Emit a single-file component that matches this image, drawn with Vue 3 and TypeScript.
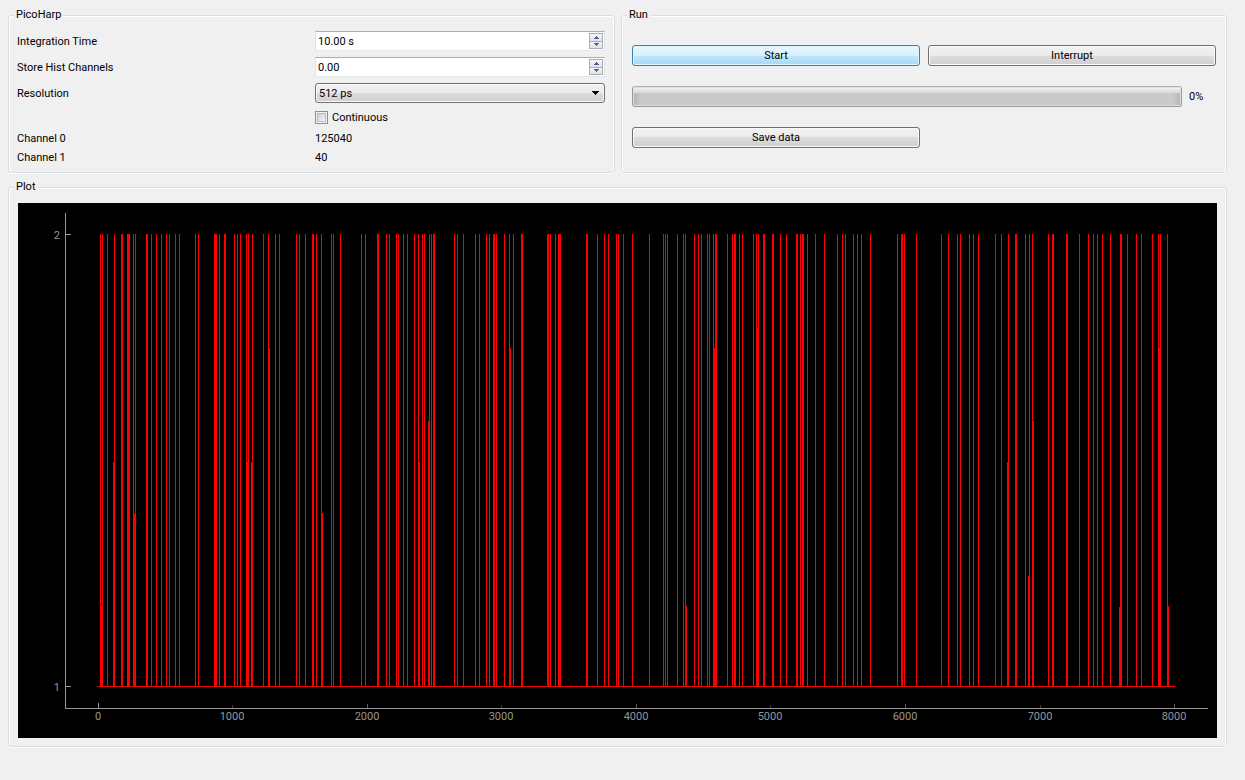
<script setup lang="ts">
import { computed, ref } from 'vue'

const integrationTime = ref('10.00 s')
const storeChannels = ref('0.00')
const resolution = ref('512 ps')
const continuous = ref(false)
const progress = ref(0)
const channel0 = ref(125040)
const channel1 = ref(40)

const top = 234
const base = 686

// Columns where the histogram reaches two counts
const peaks: number[] = [
  100, 102, 107, 114, 121, 122, 127, 128, 129, 133, 135, 146, 147, 151, 156, 161, 166, 169, 175, 179,
  195, 198, 214, 215, 216, 219, 224, 225, 234, 237, 240, 246, 248, 252, 263, 268, 275, 279, 296, 299,
  305, 312, 313, 316, 321, 331, 333, 340, 361, 365, 377, 378, 386, 389, 396, 398, 403, 407, 414, 418,
  422, 424, 429, 431, 433, 434, 454, 457, 463, 475, 479, 486, 489, 493, 494, 496, 504, 509, 513, 521,
  522, 547, 548, 550, 555, 558, 559, 560, 586, 587, 597, 604, 608, 616, 618, 623, 632, 649, 663, 665,
  667, 677, 683, 685, 694, 698, 701, 707, 709, 713, 715, 716, 727, 732, 734, 735, 739, 742, 753, 756,
  758, 763, 764, 772, 773, 780, 786, 796, 797, 800, 802, 803, 807, 815, 824, 837, 842, 845, 853, 857,
  861, 870, 897, 901, 902, 904, 916, 941, 948, 957, 960, 969, 973, 978, 995, 1001, 1008, 1015, 1016,
  1025, 1029, 1032, 1048, 1052, 1053, 1066, 1067, 1079, 1088, 1093, 1097, 1102, 1110, 1120, 1121,
  1127, 1136, 1141, 1152, 1158, 1160, 1167,
]

// Columns with a partial height: [x, y of the upper end]
const partials: [number, number][] = [
  [101, 606], [113, 462], [134, 514], [247, 462], [251, 462], [269, 348], [322, 513], [419, 462],
  [428, 421], [510, 348], [686, 606], [714, 348], [757, 328], [1007, 462], [1028, 576],
  [1033, 421], [1119, 607], [1159, 348], [1168, 606],
]

const trace = computed(() =>
  [...peaks.map((x): [number, number] => [x, top]), ...partials]
    .map(([x, y]) => `M${x} ${y}h1V${base}h-1z`)
    .join(''),
)

const xTicks = [
  { x: 98, label: '0', height: 5, tone: 'strong' },
  { x: 232, label: '1000', height: 3, tone: 'faint' },
  { x: 367, label: '2000', height: 4, tone: 'soft' },
  { x: 501, label: '3000', height: 3, tone: 'faint' },
  { x: 636, label: '4000', height: 4, tone: 'soft' },
  { x: 770, label: '5000', height: 3, tone: 'faint' },
  { x: 905, label: '6000', height: 4, tone: 'soft' },
  { x: 1040, label: '7000', height: 3, tone: 'faint' },
  { x: 1174, label: '8000', height: 4, tone: 'soft' },
]
const yTicks = [
  { y: 234, label: '2' },
  { y: 686, label: '1' },
]
</script>

<template>
  <main class="window">
    <div class="top">
      <fieldset class="group">
        <legend>PicoHarp</legend>
        <div class="form">
          <label for="integration">Integration Time</label>
          <div class="spin">
            <input id="integration" v-model="integrationTime" type="text" />
            <div class="steps">
              <button type="button" aria-label="Increase integration time">
                <svg viewBox="0 0 5 3"><path d="M2 0h1v1h1v1h1v1H0V2h1V1h1z" /></svg>
              </button>
              <button type="button" aria-label="Decrease integration time">
                <svg viewBox="0 0 5 3"><path d="M0 0h5v1H4v1H3v1H2V2H1V1H0z" /></svg>
              </button>
            </div>
          </div>

          <label for="store">Store Hist Channels</label>
          <div class="spin">
            <input id="store" v-model="storeChannels" type="text" />
            <div class="steps">
              <button type="button" aria-label="Increase channels">
                <svg viewBox="0 0 5 3"><path d="M2 0h1v1h1v1h1v1H0V2h1V1h1z" /></svg>
              </button>
              <button type="button" aria-label="Decrease channels">
                <svg viewBox="0 0 5 3"><path d="M0 0h5v1H4v1H3v1H2V2H1V1H0z" /></svg>
              </button>
            </div>
          </div>

          <label for="resolution">Resolution</label>
          <div class="combo">
            <select id="resolution" v-model="resolution">
              <option>512 ps</option>
            </select>
            <svg viewBox="0 0 7 4"><path d="M0 0h7v1H6v1H5v1H4v1H3V3H2V2H1V1H0z" /></svg>
          </div>

          <label class="check">
            <input v-model="continuous" type="checkbox" />
            <span>Continuous</span>
          </label>

          <span>Channel 0</span>
          <output>{{ channel0 }}</output>
          <span>Channel 1</span>
          <output>{{ channel1 }}</output>
        </div>
      </fieldset>

      <fieldset class="group">
        <legend>Run</legend>
        <div class="run">
          <button type="button" class="push primary">Start</button>
          <button type="button" class="push">Interrupt</button>
          <div class="meter">
            <progress id="run-progress" :value="progress" max="100" aria-label="Progress"></progress>
            <label for="run-progress">{{ progress }}%</label>
          </div>
          <button type="button" class="push">Save data</button>
        </div>
      </fieldset>
    </div>

    <fieldset class="group plot">
      <legend>Plot</legend>
      <svg class="chart" viewBox="18 203 1199 535" role="img" aria-label="Histogram">
        <rect x="18" y="203" width="1199" height="535" />
        <g class="axis">
          <rect x="65" y="213" width="1" height="496" />
          <rect x="65" y="708" width="1143" height="1" />
          <rect v-for="t in yTicks" :key="t.label" x="66" :y="t.y" width="5" height="1" />
          <rect
            v-for="t in xTicks"
            :key="t.label"
            :class="t.tone"
            :x="t.x"
            :y="708 - t.height"
            width="1"
            :height="t.height"
          />
        </g>
        <g class="trace">
          <path :d="trace" />
          <rect x="97" :y="base" width="1078" height="1" />
        </g>
        <g class="labels">
          <text v-for="t in yTicks" :key="t.label" x="60" :y="t.y + 5" text-anchor="end">
            {{ t.label }}
          </text>
          <text v-for="t in xTicks" :key="t.label" :x="t.x" y="720" text-anchor="middle">
            {{ t.label }}
          </text>
        </g>
      </svg>
    </fieldset>
  </main>
</template>

<style>
body {
  margin: 0;
  background: #f0f0f0;
}
</style>

<style scoped>
.window,
.window * {
  box-sizing: border-box;
}
.window {
  padding: 8px 18px 8px 8px;
  color: #000;
  font: 11px/14px Tahoma, Roboto, sans-serif;
}
button,
input,
select {
  margin: 0;
  color: inherit;
  font: inherit;
}
.top {
  display: grid;
  grid-template-columns: 607fr 606fr;
  gap: 6px;
}
.group {
  min-width: 0;
  margin: 0;
  padding: 9px 9px 8px 8px;
  border: 1px solid #d5dfe5;
  border-radius: 3px;
  box-shadow: inset 1px 1px #fff, inset -1px 0 #fff, 0 1px #fff;
}
.group legend {
  margin-left: -3px;
  padding: 0 2px;
  background: #f0f0f0;
}
.form {
  display: grid;
  grid-template-columns: 298fr 290fr;
  grid-template-rows: 20px 20px 20px 17px 13px 13px;
  row-gap: 6px;
  align-items: center;
}
.form > label:not(.check),
.form > span,
.form > output {
  padding-top: 1px;
}
.spin {
  display: flex;
  height: 20px;
  padding: 1px;
  border: 1px solid #e2e3ea;
  border-top-color: #abadb3;
  border-bottom-color: #e3e9ef;
  background: #fff;
}
.spin input {
  flex: 1;
  min-width: 0;
  padding: 1px 1px 0;
  border: 0;
  outline: 0;
  background: transparent;
}
.steps {
  display: flex;
  flex-direction: column;
  width: 14px;
}
.steps button {
  display: flex;
  flex: 1;
  align-items: center;
  justify-content: center;
  min-height: 0;
  padding: 0;
  border: 1px solid #abadb3;
  background: linear-gradient(#f6f6f6, #e2e2e2);
}
.steps button + button {
  border-top: 0;
}
.steps svg {
  width: 5px;
  height: 3px;
  fill: #4a62a8;
}
.combo {
  position: relative;
  height: 20px;
}
.combo select {
  width: 100%;
  height: 20px;
  padding: 1px 3px 0;
  border: 1px solid #707070;
  border-radius: 3px;
  appearance: none;
  background: linear-gradient(#f2f2f2, #ebebeb 50%, #dddddd 50%, #cfcfcf);
  box-shadow: inset 0 0 0 1px #fafafa;
}
.combo svg {
  position: absolute;
  top: 8px;
  right: 6px;
  width: 7px;
  height: 4px;
  pointer-events: none;
}
.check {
  display: flex;
  grid-column: 2;
  align-items: center;
  gap: 4px;
}
.check span {
  padding-top: 1px;
}
.check input {
  width: 13px;
  height: 13px;
  padding: 2px;
  border: 1px solid #8e8f8f;
  appearance: none;
  background: linear-gradient(135deg, #cdd2d7, #f4f4f4) content-box;
  box-shadow: inset 0 0 0 1px #f4f4f4, inset 0 0 0 2px #b6babf;
}
.run {
  display: grid;
  grid-template-columns: 1fr 1fr;
  gap: 20px 8px;
  padding: 14px 1px 0 2px;
}
.push {
  height: 21px;
  padding: 1px 0 0;
  border: 1px solid #707070;
  border-radius: 3px;
  background: linear-gradient(#f2f2f2, #ebebeb 50%, #dddddd 50%, #cfcfcf);
  box-shadow: inset 0 0 0 1px #fafafa;
}
.push.primary {
  border-color: #3c7fb1;
  background: linear-gradient(#eaf6fd, #d9f0fc 50%, #bee6fd 50%, #a7d9f5);
  box-shadow: inset 0 0 0 1px #e0f4fd;
}
.meter {
  display: flex;
  grid-column: 1 / -1;
  align-items: center;
  gap: 7px;
}
.meter label {
  width: 27px;
  padding-top: 1px;
}
.meter progress {
  flex: 1;
  min-width: 0;
  height: 21px;
  overflow: hidden;
  border: 1px solid #989898;
  border-top-color: #b2b2b2;
  border-radius: 3px;
  appearance: none;
}
.meter progress::-webkit-progress-bar {
  background:
    linear-gradient(#f8f8f8, #e6e6e6 3px, #d8d8d8 6px, transparent 6px),
    linear-gradient(90deg, #b4b4b4, #cacaca 8px, #cacaca calc(100% - 8px), #b4b4b4);
  box-shadow: inset 0 0 0 1px #dedede;
}
.plot {
  margin-top: 7px;
  padding: 9px 9px 8px;
}
.plot legend {
  margin-left: -4px;
}
.chart {
  display: block;
  width: 100%;
  shape-rendering: crispEdges;
}
.axis {
  fill: #969696;
}
.axis .soft {
  fill: #5a5a5a;
}
.axis .faint {
  fill: #3c3c3c;
}
.trace {
  fill: #f00;
}
.labels {
  fill: #969696;
}
</style>
